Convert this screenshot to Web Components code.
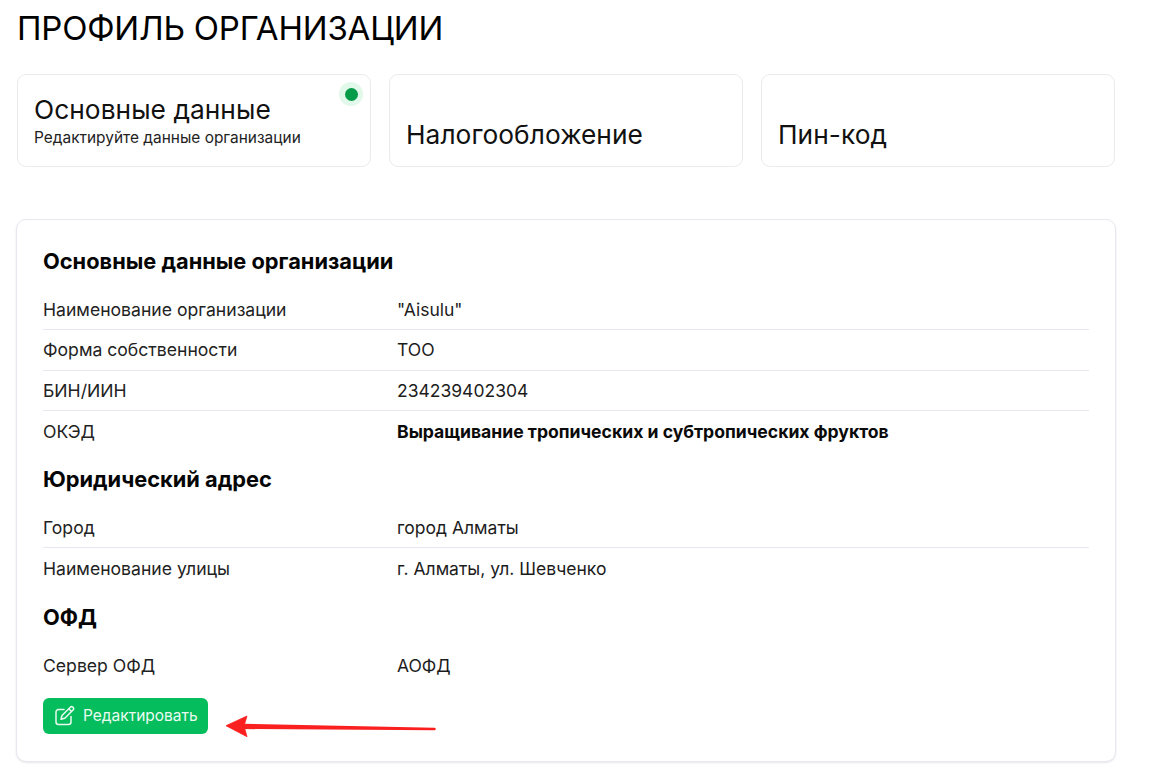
<!DOCTYPE html>
<html lang="ru"><head><meta charset="utf-8"><style>
html,body{margin:0;background:#fff;font-family:Inter,"Liberation Sans",sans-serif;color:#000;overflow:hidden}
body{height:780px}
</style></head><body>
<template id="t-page"><style>
:host{display:block;padding:0 36px 0 17px;box-sizing:border-box;width:1152px}
h1{margin:0;font-weight:400;font-size:33px;line-height:40px;padding-top:8px;height:40px;padding-bottom:26px;letter-spacing:-.2px}
.tabs{display:grid;grid-template-columns:repeat(3,1fr);gap:18px;width:1098px}
.content{margin:52px 0 0 -1px}
</style><h1><slot name="title"></slot></h1><div class="tabs"><slot name="tabs"></slot></div><div class="content"><slot></slot></div></template>

<template id="t-tab"><style>
:host{display:flex;flex-direction:column;justify-content:flex-end;position:relative;height:92.500px;box-sizing:border-box;border:1px solid #e9ebef;border-radius:9px;padding:0 16px;background:#fff}
.t{font-size:26.300px;line-height:30px;letter-spacing:.05px;color:#111}
.s{font-size:15.450px;line-height:18px;color:#222;margin-top:4px}
.s:empty{display:none}
.dot{position:absolute;top:7px;right:7px;width:24px;height:24px;border-radius:50%;background:#e2f8ea;display:none;align-items:center;justify-content:center}
.dot i{display:block;width:13px;height:13px;border-radius:50%;background:#059b48}
:host([active]) .dot{display:flex}
:host([active]){padding-bottom:18.500px}
:host(:not([active])){padding-bottom:15.500px}
</style><span class="dot"><i></i></span><div class="t"></div><div class="s"></div></template>

<template id="t-card"><style>
:host{display:block;width:1100px;height:543px;box-sizing:border-box;border:1px solid #e7e9ee;border-radius:10px;padding:26px 26px 0;box-shadow:0 1px 2px rgba(40,50,80,.12);background:#fff}
</style><slot></slot></template>

<template id="t-sec"><style>
:host{display:block;font-size:21.800px;line-height:31px;font-weight:700;color:#050505;margin:12px 0 13px}
:host([first]){margin-top:0}
:host([wide]){margin-top:13px}
</style><slot></slot></template>

<template id="t-row"><style>
:host{display:grid;grid-template-columns:354px 1fr;height:40.500px;box-sizing:border-box;align-items:center;font-size:17.600px;border-bottom:1px solid #e5e8ee;color:#222}
:host([last]){border-bottom:0}
.v{color:#1c1c1c;font-size:17.500px}
:host([strong]) .v{font-weight:700;color:#0a0a0a;font-size:17.600px}
</style><div><slot name="k"></slot></div><div class="v"><slot name="v"></slot></div></template>

<template id="t-btn"><style>
:host{display:flex;align-items:center;gap:8px;height:36px;width:165px;box-sizing:border-box;padding:0 0 2px 11px;background:#06bd5d;color:#e9fbf1;border-radius:6px;font-size:15.500px;margin-top:12px}
svg{width:21px;height:21px;flex:none}
</style><svg viewBox="0 0 21 21" fill="none" stroke="currentColor" stroke-width="1.500" stroke-linecap="round" stroke-linejoin="round"><path d="M10 4.500H4.500A2.500 2.500 0 0 0 2 7v10A2.500 2.500 0 0 0 4.500 19.500h10a2.500 2.500 0 0 0 2.500-2.500V11.500"/><path d="M16.300 2.300a1.900 1.900 0 0 1 2.700 2.700L10.800 13.200 7 14.300l1-3.800z"/><path d="M14.800 3.800l2.500 2.500"/></svg><slot></slot></template>

<template id="t-arrow"><style>
:host{position:absolute;left:225px;top:714px;width:212px;height:24px;display:block}
svg{display:block}
</style><svg width="212" height="24" viewBox="0 0 212 24"><path d="M209.500 15 L18 11 L18 13.800 Z" stroke="#fb2020" stroke-width="2.500" stroke-linejoin="round" stroke-linecap="round" fill="#fb2020"/><path d="M1 11.700 L22 2 L19 12 L22 22.700 Z" fill="#fb2020" stroke="#fb2020" stroke-width=".8" stroke-linejoin="round"/></svg></template>

<org-page>
  <span slot="title">ПРОФИЛЬ ОРГАНИЗАЦИИ</span>
  <org-tab slot="tabs" active label="Основные данные" sub="Редактируйте данные организации"></org-tab>
  <org-tab slot="tabs" label="Налогообложение"></org-tab>
  <org-tab slot="tabs" label="Пин-код"></org-tab>
  <org-card>
    <org-sec first>Основные данные организации</org-sec>
    <org-row><span slot="k">Наименование организации</span><span slot="v">"Aisulu"</span></org-row>
    <org-row><span slot="k">Форма собственности</span><span slot="v">ТОО</span></org-row>
    <org-row><span slot="k">БИН/ИИН</span><span slot="v">234239402304</span></org-row>
    <org-row last strong><span slot="k">ОКЭД</span><span slot="v">Выращивание тропических и субтропических фруктов</span></org-row>
    <org-sec>Юридический адрес</org-sec>
    <org-row><span slot="k">Город</span><span slot="v">город Алматы</span></org-row>
    <org-row last><span slot="k">Наименование улицы</span><span slot="v">г. Алматы, ул. Шевченко</span></org-row>
    <org-sec wide>ОФД</org-sec>
    <org-row last><span slot="k">Сервер ОФД</span><span slot="v">АОФД</span></org-row>
    <org-btn>Редактировать</org-btn>
  </org-card>
</org-page>
<org-arrow></org-arrow>
<script>
function plain(name,id){customElements.define(name,class extends HTMLElement{constructor(){super();this.attachShadow({mode:'open'}).appendChild(document.getElementById(id).content.cloneNode(true));}});}
plain('org-page','t-page');plain('org-card','t-card');plain('org-sec','t-sec');plain('org-row','t-row');plain('org-btn','t-btn');plain('org-arrow','t-arrow');
customElements.define('org-tab',class extends HTMLElement{constructor(){super();this.attachShadow({mode:'open'}).appendChild(document.getElementById('t-tab').content.cloneNode(true));}
connectedCallback(){this.shadowRoot.querySelector('.t').textContent=this.getAttribute('label')||'';this.shadowRoot.querySelector('.s').textContent=this.getAttribute('sub')||'';}});
</script>
</body></html>
